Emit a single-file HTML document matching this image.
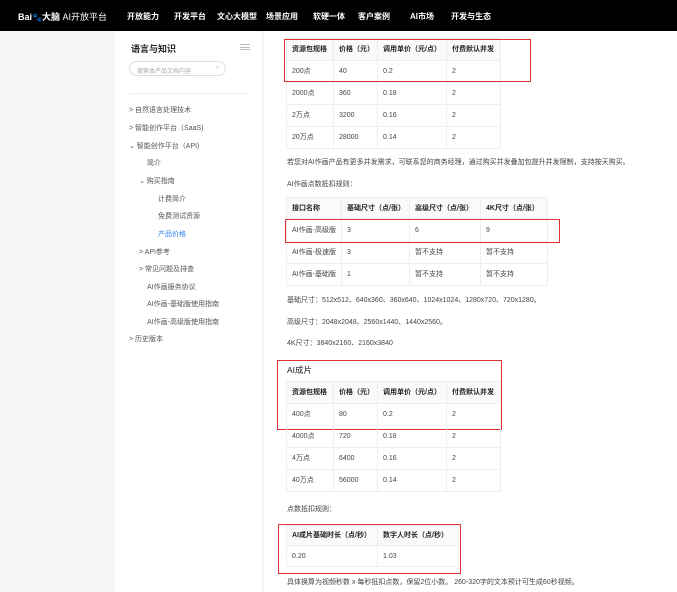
<!DOCTYPE html>
<html><head><meta charset="utf-8"><style>
*{margin:0;padding:0;box-sizing:border-box}
body{width:677px;height:592px;overflow:hidden;background:#f5f6f8;font-family:"Liberation Sans","Noto Sans CJK SC",sans-serif;position:relative;color:#333}
.hd{position:absolute;left:0;top:0;width:677px;height:31px;background:#000;color:#fff;font-size:8px}
.hd span{position:absolute;top:11px;font-weight:bold}
.side{position:absolute;left:115px;top:31px;width:148px;height:561px;background:#fff;border-right:1px solid #eee}
.main{position:absolute;left:264px;top:31px;width:413px;height:561px;background:#fff}
.a{position:absolute;font-size:7px;color:#444;white-space:nowrap}
table{position:absolute;border-collapse:collapse;font-size:7px;color:#444;table-layout:fixed}
td,th{border:1px solid #eee;padding:0 0 0 5px;text-align:left;white-space:nowrap;vertical-align:middle;line-height:9px}
th{background:#fafafa;font-weight:bold;color:#222}
.r{position:absolute;border:1.5px solid #d33;}
.n{position:absolute;font-size:7px;color:#555;white-space:nowrap}
</style></head><body>
<div class="hd">
<span style="left:18px;top:10px;font-size:9px">Bai<b style="font-size:8px">🐾</b>大脑 <span style="position:static;font-weight:normal">AI开放平台</span></span>
<span style="left:127px">开放能力</span><span style="left:174px">开发平台</span><span style="left:217px">文心大模型</span><span style="left:266px">场景应用</span><span style="left:313px">软硬一体</span><span style="left:358px">客户案例</span><span style="left:410px">AI市场</span><span style="left:451px">开发与生态</span>
</div>
<div class="side">
<div style="position:absolute;left:16px;top:11px;font-size:9px;font-weight:bold;color:#222">语言与知识</div>
<div style="position:absolute;left:125px;top:13px;width:10px;height:6px;border-top:1px solid #bbb;border-bottom:1px solid #bbb"><div style="margin-top:2px;border-top:1px solid #bbb"></div></div>
<div style="position:absolute;left:14px;top:30px;width:97px;height:15px;border:1px solid #ddd;border-radius:8px;font-size:6px;color:#aaa;padding:4px 0 0 7px">搜索本产品文档内容<span style="position:absolute;right:6px;top:3px">○</span></div>
<div style="position:absolute;left:14px;top:62px;width:120px;border-top:1px solid #eee"></div>
</div>
<div class="main"></div>
<div class="n" style="left:129px;top:105px">&gt; 自然语言处理技术</div>
<div class="n" style="left:129px;top:123px">&gt; 智能创作平台（SaaS)</div>
<div class="n" style="left:129px;top:141px">⌄ 智能创作平台（API)</div>
<div class="n" style="left:147px;top:158px">简介</div>
<div class="n" style="left:139px;top:176px">⌄ 购买指南</div>
<div class="n" style="left:158px;top:194px">计费简介</div>
<div class="n" style="left:158px;top:211px">免费测试资源</div>
<div class="n" style="left:158px;top:229px;color:#2a7ff0">产品价格</div>
<div class="n" style="left:139px;top:247px">&gt; API参考</div>
<div class="n" style="left:139px;top:264px">&gt; 常见问题及排查</div>
<div class="n" style="left:147px;top:282px">AI作画服务协议</div>
<div class="n" style="left:147px;top:299px">AI作画-基础版使用指南</div>
<div class="n" style="left:147px;top:317px">AI作画-高级版使用指南</div>
<div class="n" style="left:129px;top:334px">&gt; 历史版本</div>

<table style="left:286px;top:38px;width:214px"><colgroup><col style="width:47px"><col style="width:44px"><col style="width:69px"><col style="width:54px"></colgroup>
<tr style="height:22px"><th>资源包规格</th><th>价格（元）</th><th>调用单价（元/点）</th><th>付费默认并发</th></tr>
<tr style="height:22px"><td>200点</td><td>40</td><td>0.2</td><td>2</td></tr>
<tr style="height:22px"><td>2000点</td><td>360</td><td>0.18</td><td>2</td></tr>
<tr style="height:22px"><td>2万点</td><td>3200</td><td>0.16</td><td>2</td></tr>
<tr style="height:22px"><td>20万点</td><td>28000</td><td>0.14</td><td>2</td></tr></table>
<div class="r" style="left:284px;top:39px;width:247px;height:43px"></div>
<div class="a" style="left:287px;top:157px">若您对AI作画产品有更多并发需求，可联系您的商务经理，通过购买并发叠加包提升并发限制，支持按天购买。</div>
<div class="a" style="left:287px;top:179px">AI作画点数抵扣规则：</div>
<table style="left:286px;top:197px;width:261px"><colgroup><col style="width:55px"><col style="width:68px"><col style="width:71px"><col style="width:67px"></colgroup>
<tr style="height:22px"><th>接口名称</th><th>基础尺寸（点/张）</th><th>高级尺寸（点/张）</th><th>4K尺寸（点/张）</th></tr>
<tr style="height:22px"><td>AI作画-高级版</td><td>3</td><td>6</td><td>9</td></tr>
<tr style="height:22px"><td>AI作画-极速版</td><td>3</td><td>暂不支持</td><td>暂不支持</td></tr>
<tr style="height:22px"><td>AI作画-基础版</td><td>1</td><td>暂不支持</td><td>暂不支持</td></tr></table>
<div class="r" style="left:285px;top:219px;width:275px;height:24px"></div>
<div class="a" style="left:287px;top:295px">基础尺寸：512x512、640x360、360x640、1024x1024、1280x720、720x1280。</div>
<div class="a" style="left:287px;top:317px">高级尺寸：2048x2048、2560x1440、1440x2560。</div>
<div class="a" style="left:287px;top:338px">4K尺寸：3840x2160、2160x3840</div>
<div class="r" style="left:277px;top:360px;width:225px;height:70px"></div>
<div class="a" style="left:287px;top:364px;font-size:8.5px;color:#222">AI成片</div>
<table style="left:286px;top:381px;width:214px"><colgroup><col style="width:47px"><col style="width:44px"><col style="width:69px"><col style="width:54px"></colgroup>
<tr style="height:22px"><th>资源包规格</th><th>价格（元）</th><th>调用单价（元/点）</th><th>付费默认并发</th></tr>
<tr style="height:22px"><td>400点</td><td>80</td><td>0.2</td><td>2</td></tr>
<tr style="height:22px"><td>4000点</td><td>720</td><td>0.18</td><td>2</td></tr>
<tr style="height:22px"><td>4万点</td><td>6400</td><td>0.16</td><td>2</td></tr>
<tr style="height:22px"><td>40万点</td><td>56000</td><td>0.14</td><td>2</td></tr></table>
<div class="a" style="left:287px;top:504px">点数抵扣规则：</div>
<table style="left:286px;top:525px;width:172px"><colgroup><col style="width:91px"><col style="width:81px"></colgroup>
<tr style="height:20px"><th>AI成片基础时长（点/秒）</th><th>数字人时长（点/秒）</th></tr>
<tr style="height:21px"><td>0.20</td><td>1.03</td></tr></table>
<div class="r" style="left:278px;top:524px;width:183px;height:50px"></div>
<div class="a" style="left:287px;top:577px">具体换算为视频秒数 x 每秒抵扣点数，保留2位小数。 260-320字的文本预计可生成60秒视频。</div>
</body></html>
